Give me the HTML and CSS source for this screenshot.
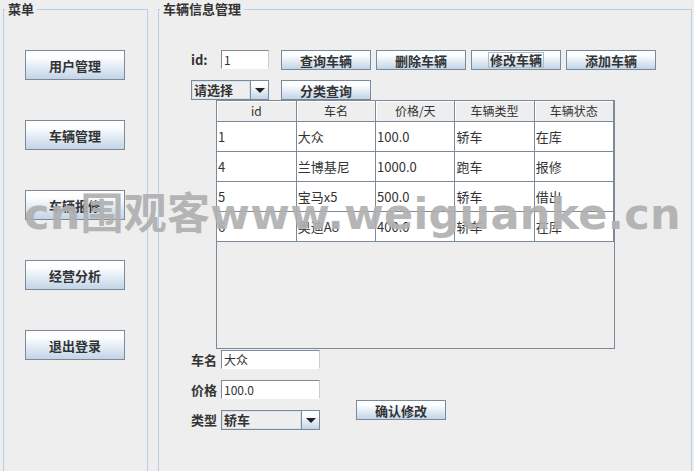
FILE: index.html
```html
<!DOCTYPE html>
<html lang="zh">
<head>
    <meta charset="UTF-8">
    <title>车辆信息管理</title>
    <link rel="stylesheet" href="styles.css">
</head>
<body>

    <div class="frame">
        <fieldset class="panel menu">
            <legend>菜单</legend>
            <div class="menu-list">
                <button class="btn menu-btn">用户管理</button>
                <button class="btn menu-btn">车辆管理</button>
                <button class="btn menu-btn">车辆报修</button>
                <button class="btn menu-btn">经营分析</button>
                <button class="btn menu-btn">退出登录</button>
            </div>
        </fieldset>

        <fieldset class="panel main">
            <legend>车辆信息管理</legend>
            <div class="main-body">
                <div class="row search-row">
                    <label class="lbl id-lbl" for="carId">id:</label>
                    <input class="field id-field" id="carId" type="text" value="1">
                    <button class="btn act-btn">查询车辆</button>
                    <button class="btn act-btn">删除车辆</button>
                    <button class="btn act-btn"><span class="focus">修改车辆</span></button>
                    <button class="btn act-btn">添加车辆</button>
                </div>

                <div class="row filter-row">
                    <div class="combo filter-combo">
                        <span class="combo-text">请选择</span>
                        <span class="combo-arrow"></span>
                    </div>
                    <button class="btn act-btn">分类查询</button>
                </div>

                <div class="table-wrap">
                    <table class="car-table">
                        <thead>
                            <tr>
                                <th>id</th>
                                <th>车名</th>
                                <th>价格/天</th>
                                <th>车辆类型</th>
                                <th>车辆状态</th>
                            </tr>
                        </thead>
                        <tbody>
                            <tr><td>1</td><td>大众</td><td>100.0</td><td>轿车</td><td>在库</td></tr>
                            <tr><td>4</td><td>兰博基尼</td><td>1000.0</td><td>跑车</td><td>报修</td></tr>
                            <tr><td>5</td><td>宝马x5</td><td>500.0</td><td>轿车</td><td>借出</td></tr>
                            <tr><td>6</td><td>奥迪A8</td><td>400.0</td><td>轿车</td><td>在库</td></tr>
                        </tbody>
                    </table>
                </div>

                <div class="edit-form">
                    <label class="lbl form-lbl" for="carName">车名</label>
                    <input class="field form-field" id="carName" type="text" value="大众">

                    <label class="lbl form-lbl" for="carPrice">价格</label>
                    <input class="field form-field" id="carPrice" type="text" value="100.0">

                    <label class="lbl form-lbl">类型</label>
                    <div class="combo type-combo">
                        <span class="combo-text">轿车</span>
                        <span class="combo-arrow"></span>
                    </div>

                    <button class="btn confirm-btn">确认修改</button>
                </div>
            </div>
        </fieldset>
    </div>

    <div class="watermark">cn围观客www.weiguanke.cn</div>

</body>
</html>
```

FILE: styles.css
```css
* {
    box-sizing: border-box;
    margin: 0;
    padding: 0;
}

body {
    font-family: "Noto Sans CJK SC", "DejaVu Sans", sans-serif;
    font-size: 12px;
    color: #333;
    background-color: #eeeeee;
    width: 694px;
    height: 471px;
    overflow: hidden;
    position: relative;
}

.frame {
    display: flex;
    gap: 10px;
    padding: 1px 0 0 3px;
}

.panel {
    border: 1px solid #b8cfe5;
    height: 471px;
    flex: none;
    min-width: 0;
}

.panel legend {
    font-size: 13px;
    font-weight: bold;
    line-height: 16px;
    padding: 0 3px;
    margin-left: 1px;
    color: #333;
}

.menu {
    width: 145px;
}

.main {
    width: 534px;
}

/* buttons, metal look */
.btn {
    font-family: inherit;
    font-size: 13px;
    font-weight: bold;
    color: #333;
    border: 1px solid #7a8a99;
    background: linear-gradient(#ffffff 0%, #fbfdff 25%, #dce7f2 65%, #c3d4e7 100%);
    display: flex;
    align-items: center;
    justify-content: center;
    cursor: pointer;
}

.menu-list {
    display: flex;
    flex-direction: column;
    gap: 40px;
    padding: 33px 0 0 21px;
}

.menu-btn {
    width: 100px;
    height: 30px;
}

.main-body {
    padding-top: 33px;
}

.row {
    display: flex;
    align-items: flex-start;
    padding-left: 32px;
    height: 20px;
}

.filter-row {
    margin-top: 10px;
}

.lbl {
    font-size: 13px;
    font-weight: bold;
    line-height: 19px;
}

.id-lbl {
    width: 30px;
}

.field {
    height: 19px;
    border: 1px solid;
    border-color: #7a8a99 #c8ced4 #ffffff #7a8a99;
    background: #fff;
    font-family: inherit;
    font-size: 12px;
    color: #333;
    padding: 0 2px;
    outline: none;
}

.id-field {
    width: 48px;
    margin-right: 12px;
}

.act-btn {
    width: 90px;
    height: 20px;
    margin-right: 5px;
}

.focus {
    border: 1px solid #a6bdd6;
    padding: 0 1px;
    line-height: 14px;
}

/* combo boxes */
.combo {
    display: flex;
    height: 20px;
    border: 1px solid #7a8a99;
}

.combo-text {
    flex: 1;
    font-size: 13px;
    font-weight: bold;
    line-height: 16px;
    padding-left: 1px;
    background: #eeeeee;
    border: 1px solid #d6e2ee;
}

.combo-arrow {
    width: 18px;
    border-left: 1px solid #7a8a99;
    background: linear-gradient(#ffffff 0%, #fbfdff 25%, #dce7f2 65%, #c3d4e7 100%);
    display: flex;
    align-items: center;
    justify-content: center;
}

.combo-arrow::after {
    content: "";
    border-left: 5px solid transparent;
    border-right: 5px solid transparent;
    border-top: 5px solid #222;
}

.filter-combo {
    width: 78px;
    margin-right: 12px;
}

/* table */
.table-wrap {
    margin-left: 57px;
    width: 399px;
    height: 249px;
    border: 1px solid #7a8a99;
    background: #eeeeee;
}

.car-table {
    width: 397px;
    border-collapse: collapse;
    table-layout: fixed;
    background: #fff;
}

.car-table th {
    height: 20px;
    font-weight: normal;
    font-size: 12px;
    background: #eeeeee;
    border-right: 1px solid #7a8a99;
    border-bottom: 1px solid #7a8a99;
    box-shadow: inset 1px 1px 0 #ffffff;
    text-align: center;
    line-height: 16px;
}

.car-table td {
    height: 30px;
    font-size: 13px;
    padding-left: 1px;
    border-right: 1px solid #7a8a99;
    border-bottom: 1px solid #7a8a99;
    white-space: nowrap;
}

/* edit form */
.edit-form {
    display: grid;
    grid-template-columns: 30px 99px 36px 90px;
    grid-template-rows: 20px 20px 20px;
    row-gap: 10px;
    padding-left: 32px;
    margin-top: 1px;
}

.form-lbl {
    grid-column: 1;
}

.form-field,
.type-combo {
    grid-column: 2;
    width: 99px;
}

.confirm-btn {
    grid-column: 4;
    grid-row: 2 / span 2;
    align-self: end;
    height: 20px;
    margin-bottom: 10px;
}

.watermark {
    position: absolute;
    left: 24px;
    top: 193px;
    font-family: "DejaVu Sans", "Noto Sans CJK SC", sans-serif;
    font-size: 43px;
    font-weight: bold;
    line-height: 43px;
    letter-spacing: 0.25px;
    color: #b0b0b0;
    opacity: 0.92;
    white-space: nowrap;
    pointer-events: none;
}
```
